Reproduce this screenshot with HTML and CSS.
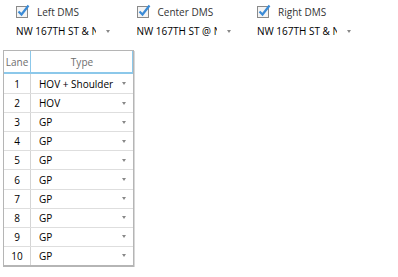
FILE: index.html
```html
<!DOCTYPE html>
<html lang="en">
<head>
  <meta charset="UTF-8" />
  <title>DMS Lanes</title>
  <link rel="stylesheet" href="styles.css">
</head>
<body>

  <div class="dms-row">
    <div class="dms">
      <label class="check">
        <svg width="14" height="14" viewBox="0 0 14 14"><rect x="0.5" y="2.5" width="11" height="11" fill="#f4f4f4" stroke="#8a8a8a"/><path d="M2.5 7.5 L5.5 10.5 L12.5 1.5" fill="none" stroke="#3b8bd6" stroke-width="2.2"/></svg>
        <span>Left DMS</span>
      </label>
      <div class="select">
        <span class="select-text">NW 167TH ST &amp; NW 2ND AVE</span>
        <span class="arrow"></span>
      </div>
    </div>
    <div class="dms">
      <label class="check">
        <svg width="14" height="14" viewBox="0 0 14 14"><rect x="0.5" y="2.5" width="11" height="11" fill="#f4f4f4" stroke="#8a8a8a"/><path d="M2.5 7.5 L5.5 10.5 L12.5 1.5" fill="none" stroke="#3b8bd6" stroke-width="2.2"/></svg>
        <span>Center DMS</span>
      </label>
      <div class="select">
        <span class="select-text">NW 167TH ST @ NW 7TH AVE</span>
        <span class="arrow"></span>
      </div>
    </div>
    <div class="dms">
      <label class="check">
        <svg width="14" height="14" viewBox="0 0 14 14"><rect x="0.5" y="2.5" width="11" height="11" fill="#f4f4f4" stroke="#8a8a8a"/><path d="M2.5 7.5 L5.5 10.5 L12.5 1.5" fill="none" stroke="#3b8bd6" stroke-width="2.2"/></svg>
        <span>Right DMS</span>
      </label>
      <div class="select">
        <span class="select-text">NW 167TH ST &amp; NW 12TH AVE</span>
        <span class="arrow"></span>
      </div>
    </div>
  </div>

  <div class="lane-grid">
    <div class="grid-head">
      <div class="cell lane">Lane</div>
      <div class="cell type active">Type</div>
    </div>
    <div id="rows"></div>
  </div>

  <script>
    const lanes = ['HOV + Shoulder', 'HOV', 'GP', 'GP', 'GP', 'GP', 'GP', 'GP', 'GP', 'GP'];
    const rows = document.getElementById('rows');

    lanes.forEach((t, i) => {
      const div = document.createElement('div');
      div.className = 'grid-row';
      div.innerHTML = `
        <div class="cell lane">${i + 1}</div>
        <div class="cell type"><span>${t}</span><span class="arrow"></span></div>
      `;
      rows.appendChild(div);
    });
  </script>

</body>
</html>
```

FILE: styles.css
```css
body {
  font-family: "Open Sans", "Noto Sans", sans-serif;
  font-size: 10px;
  color: #000;
  background: #fff;
  margin: 0;
  padding: 0;
}

.dms-row {
  display: flex;
  padding: 4px 0 0 16px;
}

.dms {
  width: 120.5px;
  display: flex;
  flex-direction: column;
}

.check {
  display: flex;
  align-items: center;
  height: 16px;
  gap: 7px;
  color: #333;
}

.check svg {
  margin-top: -2px;
}

.select {
  display: flex;
  align-items: center;
  height: 14px;
  margin-top: 4px;
}

.select-text {
  flex: 0 0 80px;
  white-space: nowrap;
  overflow: hidden;
}

.arrow {
  display: inline-block;
  width: 0;
  height: 0;
  border-left: 2.5px solid transparent;
  border-right: 2.5px solid transparent;
  border-top: 3px solid #888;
}

.select .arrow {
  margin-left: 10px;
}

.lane-grid {
  margin: 12px 0 0 3px;
  width: 129px;
  border: 1px solid #b5b5b5;
  border-bottom-width: 2px;
  box-shadow: 1px 1px 0 #d8d8d8;
}

.grid-head,
.grid-row {
  display: flex;
}

.grid-head {
  height: 21px;
  border-bottom: 2px solid #8cc8ea;
}

.grid-head .cell {
  color: #6e6e6e;
  justify-content: center;
}

.grid-head .lane,
.grid-head .active {
  border-right: 1px solid #8cc8ea;
}

.cell {
  display: flex;
  align-items: center;
}

.lane {
  width: 26px;
  justify-content: center;
  border-right: 1px solid #d4d4d4;
}

.type {
  flex: 1;
  justify-content: space-between;
  padding: 0 7px 0 8px;
}

.grid-row {
  height: 18.1px;
  border-top: 1px solid #dedede;
}

.grid-row:first-child {
  border-top: none;
  height: 19.1px;
}
```
